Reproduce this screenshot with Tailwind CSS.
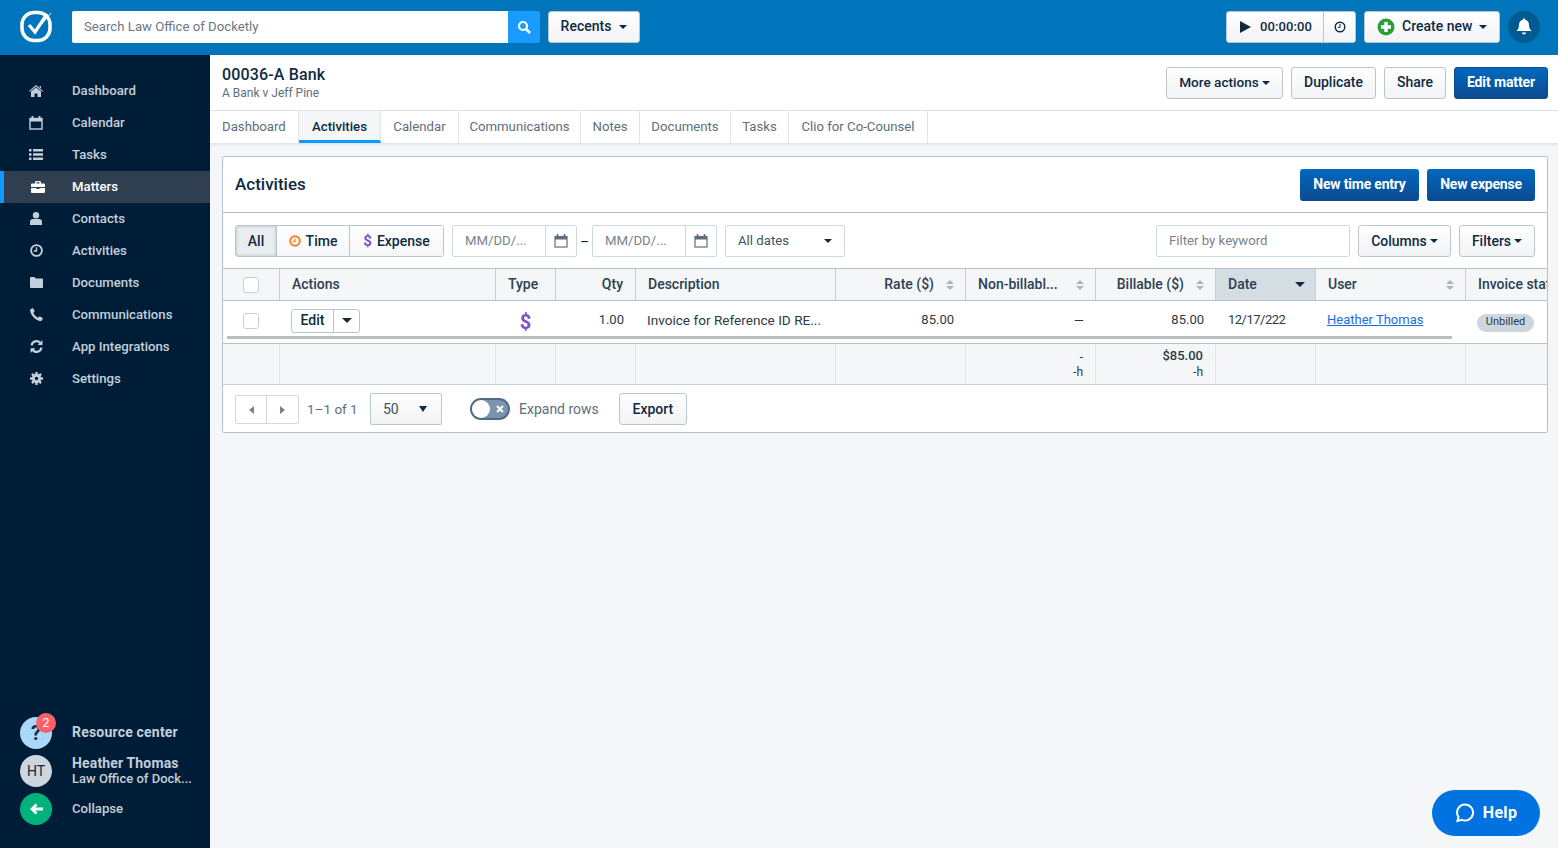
<!DOCTYPE html>
<html lang="en">
<head>
<meta charset="UTF-8" />
<title>Activities - 00036-A Bank</title>
<script src="https://cdn.jsdelivr.net/npm/@tailwindcss/browser@4"></script>
</head>
<body class="h-[848px] w-[1558px] overflow-hidden bg-[#f4f6f8] font-['Roboto',sans-serif] text-[14px] text-[#0f2a43]">

<!-- Top bar -->
<header class="h-[55px] bg-[#0075bb] flex items-center pl-[20px] pr-[18px] pb-[2px]">
  <svg width="33" height="33" viewBox="0 0 33 33" class="shrink-0" fill="none">
    <rect x="2" y="2.500" width="28" height="28" rx="12" stroke="#fff" stroke-width="3.500"/>
    <path d="M9 15l6 7L27 4" stroke="#fff" stroke-width="3.200"/>
    <path d="M15 22L31 3" stroke="#fff" stroke-width="1"/>
  </svg>
  <div class="ml-[19px] flex h-[32px] w-[468px]">
    <div class="flex-1 bg-white rounded-l-[2px] pl-[12px] flex items-center text-[#6b7783] text-[13.2px]">Search Law Office of Docketly</div>
    <div class="w-[32px] bg-[#1a9bff] rounded-r-[2px] flex items-center justify-center">
      <svg width="14" height="14" viewBox="0 0 14 14" fill="none"><circle cx="6" cy="6" r="4" stroke="#fff" stroke-width="2.200"/><path d="M9 9l4 4" stroke="#fff" stroke-width="2.600"/></svg>
    </div>
  </div>
  <button class="ml-[8px] h-[32px] w-[92px] rounded-[3px] border border-[#b9c6d0] bg-gradient-to-b from-white to-[#f1f3f5] font-medium flex items-center justify-center gap-[8px]">Recents <span class="w-0 h-0 border-x-[4px] border-x-transparent border-t-[4px] border-t-[#0f2a43]"></span></button>

  <div class="ml-auto flex h-[32px] w-[130px] rounded-[3px] border border-[#b9c6d0] bg-gradient-to-b from-white to-[#f1f3f5]">
    <div class="flex-1 flex items-center pl-[13px] gap-[9px] border-r border-[#b9c6d0]">
      <svg width="11" height="12" viewBox="0 0 11 12"><path d="M0 0l11 6-11 6z" fill="#0f2a43"/></svg>
      <span class="font-medium tracking-[0.1px] text-[13px]">00:00:00</span>
    </div>
    <div class="w-[31px] flex items-center justify-center">
      <svg width="12" height="12" viewBox="0 0 12 12" fill="none"><circle cx="6" cy="6" r="4.800" stroke="#0f2a43" stroke-width="1.400"/><path d="M6 3v3.400H3.800" stroke="#0f2a43"/></svg>
    </div>
  </div>
  <button class="ml-[8px] h-[32px] w-[136px] rounded-[3px] border border-[#b9c6d0] bg-gradient-to-b from-white to-[#f1f3f5] font-medium flex items-center pl-[12px]">
    <svg width="18" height="18" viewBox="0 0 18 18"><circle cx="9" cy="9" r="8.500" fill="#2e9e3a"/><path d="M9 4v10M4 9h10" stroke="#fff" stroke-width="3.400"/></svg>
    <span class="ml-[7px]">Create new</span>
    <span class="ml-[7px] w-0 h-0 border-x-[4px] border-x-transparent border-t-[4px] border-t-[#0f2a43]"></span>
  </button>
  <div class="ml-[8px] w-[32px] h-[32px] rounded-full bg-[#005a92] flex items-center justify-center">
    <svg width="16" height="17" viewBox="0 0 16 17"><path d="M8 0.500c.8 0 1.200.5 1.200 1.200C12 2.300 13 4.500 13 7c0 3 1 4.500 2.500 6H.5C2 11.500 3 10 3 7c0-2.500 1-4.700 3.800-5.300C6.800 1 7.200.5 8 .5z" fill="#fff"/><path d="M6 14.500h4a2 2 0 0 1-4 0z" fill="#fff"/></svg>
  </div>
</header>

<div class="flex h-[793px]">
  <!-- Sidebar -->
  <aside class="w-[210px] shrink-0 bg-[#001d38] flex flex-col text-[#c3d0db] font-medium pt-[20px] pb-[23px]">
    <nav class="flex flex-col text-[13.2px]">
      <a class="h-[32px] pb-[1px] flex items-center"><span class="w-[72px] flex justify-center"><svg width="14" height="12" viewBox="0 0 14 12" fill="#c3d0db"><path d="M7 0l7 6-.7.8L7 1.600.7 6.800 0 6z"/><path d="M2 6.500L7 2.500l5 4V12H8.500V8.500h-3V12H2z"/><path d="M10.500 1H12v2.500l-1.500-1.200z"/></svg></span>Dashboard</a>
      <a class="h-[32px] pb-[1px] flex items-center"><span class="w-[72px] flex justify-center"><svg width="14" height="14" viewBox="0 0 14 14" fill="none"><rect x="1" y="2.500" width="12" height="10.500" stroke="#c3d0db" stroke-width="1.400"/><path d="M1 3h12v2.500H1z" fill="#c3d0db"/><path d="M3.500 0v3.500M10.500 0v3.500" stroke="#c3d0db" stroke-width="1.800"/></svg></span>Calendar</a>
      <a class="h-[32px] pb-[1px] flex items-center"><span class="w-[72px] flex justify-center"><svg width="14" height="11" viewBox="0 0 14 11" fill="#c3d0db"><path d="M0 0h2.500v2.500H0zM4 0h10v2.500H4zM0 4.250h2.500v2.500H0zM4 4.250h10v2.500H4zM0 8.500h2.500V11H0zM4 8.500h10V11H4z"/></svg></span>Tasks</a>
      <a class="h-[32px] pb-[1px] flex items-center bg-[#2f3f50] border-l-[4px] border-[#0d9bff] text-white"><span class="w-[68px] flex justify-center"><svg width="14" height="12" viewBox="0 0 14 12" fill="#fff"><path d="M5 0h4l1 1v1.500h3a1 1 0 0 1 1 1V6H0V3.500a1 1 0 0 1 1-1h3V1zm.500 1.200v1.300h3V1.200z"/><path d="M0 7h5.500v1h3V7H14v4a1 1 0 0 1-1 1H1a1 1 0 0 1-1-1z"/></svg></span>Matters</a>
      <a class="h-[32px] pb-[1px] flex items-center"><span class="w-[72px] flex justify-center"><svg width="12" height="13" viewBox="0 0 12 13" fill="#c3d0db"><circle cx="6" cy="3.200" r="3.200"/><path d="M0 13V9.500C0 7.800 1.500 7 3 7h6c1.500 0 3 .8 3 2.500V13z"/></svg></span>Contacts</a>
      <a class="h-[32px] pb-[1px] flex items-center"><span class="w-[72px] flex justify-center"><svg width="13" height="13" viewBox="0 0 12 12" fill="none"><circle cx="6" cy="6" r="5" stroke="#c3d0db" stroke-width="1.700"/><path d="M6 3v3.500H3.500" stroke="#c3d0db" stroke-width="1.300"/></svg></span>Activities</a>
      <a class="h-[32px] pb-[1px] flex items-center"><span class="w-[72px] flex justify-center"><svg width="13" height="11" viewBox="0 0 13 11" fill="#c3d0db"><path d="M0 1a1 1 0 0 1 1-1h3.500L6 1.500h6a1 1 0 0 1 1 1V10a1 1 0 0 1-1 1H1a1 1 0 0 1-1-1z"/></svg></span>Documents</a>
      <a class="h-[32px] pb-[1px] flex items-center"><span class="w-[72px] flex justify-center"><svg width="13" height="13" viewBox="0 0 11 11" fill="#c3d0db"><path d="M2.500 0L4 2.800 2.800 4.200C3.500 5.700 5 7.300 6.800 8.200L8.200 7 11 8.700 9.800 10.700C9.300 11 8.500 11 7.500 10.700 3.800 9.500 1.200 6.500.2 3 0 2 .2 1.300.6.900z"/></svg></span>Communications</a>
      <a class="h-[32px] pb-[1px] flex items-center"><span class="w-[72px] flex justify-center"><svg width="13" height="13" viewBox="0 0 12 12" fill="none"><path d="M1.500 5A4.500 4.500 0 0 1 9.500 2.800" stroke="#c3d0db" stroke-width="2.100"/><path d="M11.500 0v4.500H7z" fill="#c3d0db"/><path d="M10.500 7A4.500 4.500 0 0 1 2.500 9.200" stroke="#c3d0db" stroke-width="2.100"/><path d="M.5 12V7.500H5z" fill="#c3d0db"/></svg></span>App Integrations</a>
      <a class="h-[32px] pb-[1px] flex items-center"><span class="w-[72px] flex justify-center"><svg width="13" height="13" viewBox="0 0 12 12" fill="none"><circle cx="6" cy="6" r="3" stroke="#c3d0db" stroke-width="2.800"/><path d="M6 0v2M6 10v2M0 6h2M10 6h2M1.800 1.800l1.400 1.400M8.800 8.800l1.400 1.400M1.800 10.200l1.400-1.400M8.800 3.200l1.400-1.400" stroke="#c3d0db" stroke-width="2.200"/></svg></span>Settings</a>
    </nav>

    <div class="mt-auto flex flex-col gap-[6px]">
      <div class="flex items-center h-[32px]">
        <div class="relative ml-[20px] w-[32px] h-[32px] rounded-full bg-[#a9d8fb] flex items-center justify-center text-[#0f2a43] text-[20px] font-bold">?
          <span class="absolute top-[-4px] right-[-4px] w-[20px] h-[20px] rounded-full bg-[#ff5f66] text-white text-[13px] font-normal flex items-center justify-center">2</span>
        </div>
        <span class="ml-[20px] font-bold tracking-[0.2px] text-[#c3d0db] mt-[-1px]">Resource center</span>
      </div>
      <div class="flex items-center h-[32px]">
        <div class="ml-[20px] w-[32px] h-[32px] rounded-full bg-[#cbd6de] flex items-center justify-center text-[#0f2a43] font-normal">HT</div>
        <div class="ml-[20px] w-[122px] leading-[16px] whitespace-nowrap mt-[-1px]">
          <div class="font-bold tracking-[0.15px]">Heather Thomas</div>
          <div class="text-[13px]">Law Office of Dock...</div>
        </div>
      </div>
      <div class="flex items-center h-[32px]">
        <div class="ml-[20px] w-[32px] h-[32px] rounded-full bg-[#00b27a] flex items-center justify-center">
          <svg width="13" height="12" viewBox="0 0 13 12" fill="none"><path d="M6.500 1.500L2 6l4.500 4.500M2.500 6H13" stroke="#fff" stroke-width="2.800"/></svg>
        </div>
        <span class="ml-[20px] text-[13.2px] mt-[-1px]">Collapse</span>
      </div>
    </div>
  </aside>

  <!-- Main -->
  <main class="flex-1 min-w-0 relative">
    <div class="h-[56px] bg-white border-b border-[#dfe5ea] flex items-center pl-[12px] pr-[10px]">
      <div>
        <div class="text-[16px] font-medium leading-[20px] mt-[-1px] tracking-[0.15px]">00036-A Bank</div>
        <div class="text-[12px] leading-[14px] text-[#5e6e7d] mt-[1px]">A Bank v Jeff Pine</div>
      </div>
      <div class="ml-auto flex gap-[8px] font-medium">
        <button class="h-[32px] w-[117px] rounded-[3px] border border-[#b9c6d0] bg-gradient-to-b from-white to-[#f1f3f5] flex items-center justify-center gap-[3px] text-[13.6px]">More actions <span class="w-0 h-0 border-x-[4px] border-x-transparent border-t-[4px] border-t-[#0f2a43]"></span></button>
        <button class="h-[32px] w-[85px] rounded-[3px] border border-[#b9c6d0] bg-gradient-to-b from-white to-[#f1f3f5]">Duplicate</button>
        <button class="h-[32px] w-[62px] rounded-[3px] border border-[#b9c6d0] bg-gradient-to-b from-white to-[#f1f3f5]">Share</button>
        <button class="h-[32px] w-[94px] rounded-[3px] border border-[#0b4a90] bg-gradient-to-b from-[#0069bf] to-[#0b4a90] text-white font-bold tracking-[-0.1px]">Edit matter</button>
      </div>
    </div>

    <!-- Tabs -->
    <div class="h-[33px] bg-white border-b border-[#dfe5ea] shadow-[0_1px_2px_rgba(0,0,0,0.08)] flex text-[#5e6e7d] text-[13.2px]">
      <a class="pl-[12px] w-[89px] border-r border-[#dfe5ea] flex items-center">Dashboard</a>
      <a class="w-[82px] pt-[3px] border-r border-[#dfe5ea] border-b-[3px] border-b-[#0d9bff] bg-[#f4f6f8] flex items-center justify-center text-[#0f2a43] font-medium">Activities</a>
      <a class="w-[78px] border-r border-[#dfe5ea] flex items-center justify-center">Calendar</a>
      <a class="w-[122px] border-r border-[#dfe5ea] flex items-center justify-center">Communications</a>
      <a class="w-[59px] border-r border-[#dfe5ea] flex items-center justify-center">Notes</a>
      <a class="w-[91px] border-r border-[#dfe5ea] flex items-center justify-center">Documents</a>
      <a class="w-[58px] border-r border-[#dfe5ea] flex items-center justify-center">Tasks</a>
      <a class="w-[139px] border-r border-[#dfe5ea] flex items-center justify-center">Clio for Co-Counsel</a>
    </div>

    <!-- Activities card -->
    <section class="relative mt-[12px] ml-[12px] mr-[10px] h-[277px] bg-white border border-[#b4c4ce] rounded-[2px] overflow-hidden">
      <div class="h-[56px] border-b border-[#b4c4ce] flex items-center pl-[12px] pr-[12px]">
        <h2 class="text-[17px] font-medium">Activities</h2>
        <div class="ml-auto flex gap-[8px] text-white font-bold text-[14px] tracking-[-0.2px]">
          <button class="h-[32px] w-[119px] rounded-[3px] bg-gradient-to-b from-[#0069bf] to-[#0b4a90]">New time entry</button>
          <button class="h-[32px] w-[108px] rounded-[3px] bg-gradient-to-b from-[#0069bf] to-[#0b4a90]">New expense</button>
        </div>
      </div>

      <!-- Toolbar -->
      <div class="h-[56px] pt-[1px] flex items-center pl-[12px] pr-[12px] border-b border-[#b4c4ce]">
        <div class="flex h-[32px] rounded-[3px] border border-[#b9c6d0] font-medium">
          <div class="w-[41px] bg-[#e9edf0] shadow-[inset_0_0_3px_rgba(0,0,0,0.25)] border-r border-[#b9c6d0] flex items-center justify-center">All</div>
          <div class="w-[73px] bg-gradient-to-b from-white to-[#f5f6f8] border-r border-[#b9c6d0] flex items-center justify-center gap-[5px]">
            <svg width="12" height="12" viewBox="0 0 12 12" fill="none"><circle cx="6" cy="6" r="4.800" stroke="#f5821f" stroke-width="2"/><path d="M6 3.500v2.800H3.800" stroke="#f5821f" stroke-width="1.200"/></svg>Time</div>
          <div class="w-[93px] bg-gradient-to-b from-white to-[#f5f6f8] flex items-center justify-center gap-[5px]">
            <span class="text-[#7e4fd0] font-bold text-[15px]">$</span>Expense</div>
        </div>
        <div class="ml-[8px] flex h-[32px] w-[125px] border border-[#cfd9e0] rounded-[2px] text-[#76838f] text-[13.2px]">
          <div class="flex-1 pl-[12px] flex items-center border-r border-[#cfd9e0]">MM/DD/...</div>
          <div class="w-[30px] flex items-center justify-center"><svg width="14" height="14" viewBox="0 0 14 14" fill="none"><rect x="1" y="2.500" width="12" height="10.500" stroke="#5e6e7d" stroke-width="1.200"/><path d="M1 3h12v2.500H1z" fill="#5e6e7d"/><path d="M3.500 0v3.500M10.500 0v3.500" stroke="#5e6e7d" stroke-width="1.600"/></svg></div>
        </div>
        <span class="w-[15px] text-center mt-[3px]">–</span>
        <div class="flex h-[32px] w-[125px] border border-[#cfd9e0] rounded-[2px] text-[#76838f] text-[13.2px]">
          <div class="flex-1 pl-[12px] flex items-center border-r border-[#cfd9e0]">MM/DD/...</div>
          <div class="w-[30px] flex items-center justify-center"><svg width="14" height="14" viewBox="0 0 14 14" fill="none"><rect x="1" y="2.500" width="12" height="10.500" stroke="#5e6e7d" stroke-width="1.200"/><path d="M1 3h12v2.500H1z" fill="#5e6e7d"/><path d="M3.500 0v3.500M10.500 0v3.500" stroke="#5e6e7d" stroke-width="1.600"/></svg></div>
        </div>
        <div class="ml-[8px] h-[32px] w-[120px] border border-[#cfd9e0] rounded-[2px] flex items-center pl-[12px] text-[#3f5163] text-[13.2px]">All dates<span class="ml-auto mr-[12px] w-0 h-0 border-x-[4px] border-x-transparent border-t-[4px] border-t-[#0f2a43]"></span></div>

        <div class="ml-auto h-[32px] w-[194px] border border-[#cfd9e0] rounded-[2px] flex items-center pl-[12px] text-[#76838f] text-[13.2px]">Filter by keyword</div>
        <button class="ml-[8px] h-[32px] w-[93px] rounded-[3px] border border-[#b9c6d0] bg-gradient-to-b from-white to-[#f1f3f5] font-medium flex items-center justify-center gap-[3px]">Columns <span class="w-0 h-0 border-x-[4px] border-x-transparent border-t-[4px] border-t-[#0f2a43]"></span></button>
        <button class="ml-[8px] h-[32px] w-[76px] rounded-[3px] border border-[#b9c6d0] bg-gradient-to-b from-white to-[#f1f3f5] font-medium flex items-center justify-center gap-[3px]">Filters <span class="w-0 h-0 border-x-[4px] border-x-transparent border-t-[4px] border-t-[#0f2a43]"></span></button>
      </div>

      <!-- Table header -->
      <div class="grid grid-cols-[57px_216px_60px_80px_200px_130px_130px_120px_100px_150px_81px] h-[32px] bg-[#f4f6f8] border-b border-[#b4c4ce] font-medium text-[#2d4052]">
        <div class="border-r border-[#c5d1d9] flex items-center justify-center pr-[1px]"><span class="block w-[16px] h-[16px] bg-white border border-[#c5d1d9] rounded-[3px]"></span></div>
        <div class="border-r border-[#c5d1d9] flex items-center pl-[12px]">Actions</div>
        <div class="border-r border-[#c5d1d9] flex items-center pl-[12px]">Type</div>
        <div class="border-r border-[#c5d1d9] flex items-center justify-end pr-[12px]">Qty</div>
        <div class="border-r border-[#c5d1d9] flex items-center pl-[12px]">Description</div>
        <div class="border-r border-[#c5d1d9] flex items-center justify-end pr-[11px] gap-[12px]">Rate ($)<span class="flex flex-col gap-[2px]"><i class="block w-0 h-0 border-x-[4px] border-x-transparent border-b-[4px] border-b-[#a9b6c0]"></i><i class="block w-0 h-0 border-x-[4px] border-x-transparent border-t-[4px] border-t-[#a9b6c0]"></i></span></div>
        <div class="border-r border-[#c5d1d9] flex items-center pl-[12px]">Non-billabl...<span class="ml-auto mr-[11px] flex flex-col gap-[2px]"><i class="block w-0 h-0 border-x-[4px] border-x-transparent border-b-[4px] border-b-[#a9b6c0]"></i><i class="block w-0 h-0 border-x-[4px] border-x-transparent border-t-[4px] border-t-[#a9b6c0]"></i></span></div>
        <div class="border-r border-[#c5d1d9] flex items-center justify-end pr-[11px] gap-[12px]">Billable ($)<span class="flex flex-col gap-[2px]"><i class="block w-0 h-0 border-x-[4px] border-x-transparent border-b-[4px] border-b-[#a9b6c0]"></i><i class="block w-0 h-0 border-x-[4px] border-x-transparent border-t-[4px] border-t-[#a9b6c0]"></i></span></div>
        <div class="bg-[#d4dde2] border-r border-[#c5d1d9] flex items-center pl-[12px]">Date<span class="ml-auto mr-[10px] w-0 h-0 border-x-[5px] border-x-transparent border-t-[5px] border-t-[#0f2a43]"></span></div>
        <div class="border-r border-[#c5d1d9] flex items-center pl-[12px]">User<span class="ml-auto mr-[11px] flex flex-col gap-[2px]"><i class="block w-0 h-0 border-x-[4px] border-x-transparent border-b-[4px] border-b-[#a9b6c0]"></i><i class="block w-0 h-0 border-x-[4px] border-x-transparent border-t-[4px] border-t-[#a9b6c0]"></i></span></div>
        <div class="flex items-center pl-[12px] whitespace-nowrap overflow-hidden">Invoice status</div>
      </div>

      <!-- Row -->
      <div class="relative grid grid-cols-[57px_216px_60px_80px_200px_130px_130px_120px_100px_150px_81px] h-[43px] border-b border-[#b4c4ce] text-[#2d3a45] text-[13px] pb-[4px]">
        <div class="flex items-center justify-center pr-[1px] mt-[2px]"><span class="block w-[16px] h-[16px] bg-white border border-[#c5d1d9] rounded-[3px]"></span></div>
        <div class="flex items-center pl-[11px] mt-[1px]">
          <div class="flex h-[24px] w-[69px] border border-[#b9c6d0] rounded-[3px] font-medium text-[14px] text-[#0f2a43]">
            <span class="w-[42px] flex items-center justify-center border-r border-[#b9c6d0]">Edit</span>
            <span class="flex-1 flex items-center justify-center"><i class="block w-0 h-0 border-x-[5px] border-x-transparent border-t-[5px] border-t-[#0f2a43]"></i></span>
          </div>
        </div>
        <div class="flex items-center justify-center text-[#7e4fd0] font-bold text-[20px] pr-[1px] mt-[3px]">$</div>
        <div class="flex items-center justify-end pr-[12px]">1.00</div>
        <div class="flex items-center pl-[11px] whitespace-nowrap text-[13.6px]">Invoice for Reference ID RE...</div>
        <div class="flex items-center justify-end pr-[12px]">85.00</div>
        <div class="flex items-center justify-end pr-[12px] mt-[2px]">—</div>
        <div class="flex items-center justify-end pr-[12px]">85.00</div>
        <div class="flex items-center pl-[12px] tracking-[-0.5px]">12/17/222</div>
        <div class="flex items-center pl-[11px]"><a class="text-[#1a6fe0] underline">Heather Thomas</a></div>
        <div class="flex items-center pl-[11px] mt-[5px]"><span class="h-[18px] w-[57px] rounded-full bg-[#cbd6de] text-[11px] flex items-center justify-center">Unbilled</span></div>
        <div class="absolute left-[4px] top-[35px] w-[1225px] h-[3px] bg-[#bdbdbd]"></div>
      </div>

      <!-- Totals -->
      <div class="grid grid-cols-[57px_216px_60px_80px_200px_130px_130px_120px_100px_150px_81px] h-[41px] bg-[#f4f6f8] border-b border-[#c5d1d9] text-[12px] text-[#2d3a45]">
        <div class="border-r border-[#dfe5ea]"></div>
        <div class="border-r border-[#dfe5ea]"></div>
        <div class="border-r border-[#dfe5ea]"></div>
        <div class="border-r border-[#dfe5ea]"></div>
        <div class="border-r border-[#dfe5ea]"></div>
        <div class="border-r border-[#dfe5ea]"></div>
        <div class="border-r border-[#dfe5ea] text-right pr-[12px] pt-[6px] leading-[15px]"><div>-</div><div>-h</div></div>
        <div class="border-r border-[#dfe5ea] text-right pr-[12px] pt-[4px] leading-[16px]"><div class="text-[13px] font-medium">$85.00</div><div>-h</div></div>
        <div class="border-r border-[#dfe5ea]"></div>
        <div class="border-r border-[#dfe5ea]"></div>
        <div></div>
      </div>

      <!-- Pagination -->
      <div class="h-[47px] pt-[1px] flex items-center pl-[12px]">
        <div class="flex h-[29px] w-[64px] border border-[#cfd9e0] rounded-[2px] mt-[1px]">
          <span class="w-[31px] border-r border-[#cfd9e0] flex items-center justify-center"><i class="block w-0 h-0 border-y-[4px] border-y-transparent border-r-[5px] border-r-[#76838f]"></i></span>
          <span class="flex-1 flex items-center justify-center"><i class="block w-0 h-0 border-y-[4px] border-y-transparent border-l-[5px] border-l-[#76838f]"></i></span>
        </div>
        <span class="ml-[8px] w-[50px] text-[#5e6e7d] text-[13.5px] whitespace-nowrap">1–1 of 1</span>
        <div class="ml-[13px] h-[32px] w-[72px] border border-[#b9c6d0] rounded-[2px] bg-gradient-to-b from-white to-[#f1f3f5] flex items-center pl-[12px] text-[#3f5163]">50<span class="ml-auto mr-[14px] w-0 h-0 border-x-[4.500px] border-x-transparent border-t-[6px] border-t-[#0f2a43]"></span></div>
        <div class="relative ml-[28px] w-[40px] h-[22px] rounded-full bg-[#7a94ad] border-2 border-[#4e6a84]">
          <span class="absolute left-0 top-0 w-[18px] h-[18px] rounded-full bg-white"></span>
          <svg class="absolute right-[4px] top-[5px]" width="8" height="8" viewBox="0 0 8 8"><path d="M1 1l6 6M7 1l-6 6" stroke="#fff" stroke-width="2"/></svg>
        </div>
        <span class="ml-[9px] text-[#5e6e7d]">Expand rows</span>
        <button class="ml-[20px] h-[32px] w-[68px] rounded-[3px] border border-[#b9c6d0] bg-gradient-to-b from-white to-[#f1f3f5] font-medium">Export</button>
      </div>
    </section>

    <!-- Help bubble -->
    <button class="absolute left-[1222px] top-[735px] w-[108px] h-[46px] rounded-full bg-[#0073e0] text-white font-bold text-[16px] tracking-[0.3px] flex items-center justify-center gap-[8px]">
      <svg width="20" height="20" viewBox="0 0 20 20" fill="none"><path d="M10 1.500a8 8 0 1 1-3 15.400L2.500 18 3.500 14A8 8 0 0 1 10 1.500z" stroke="#fff" stroke-width="2"/></svg>
      Help
    </button>
  </main>
</div>
</body>
</html>
